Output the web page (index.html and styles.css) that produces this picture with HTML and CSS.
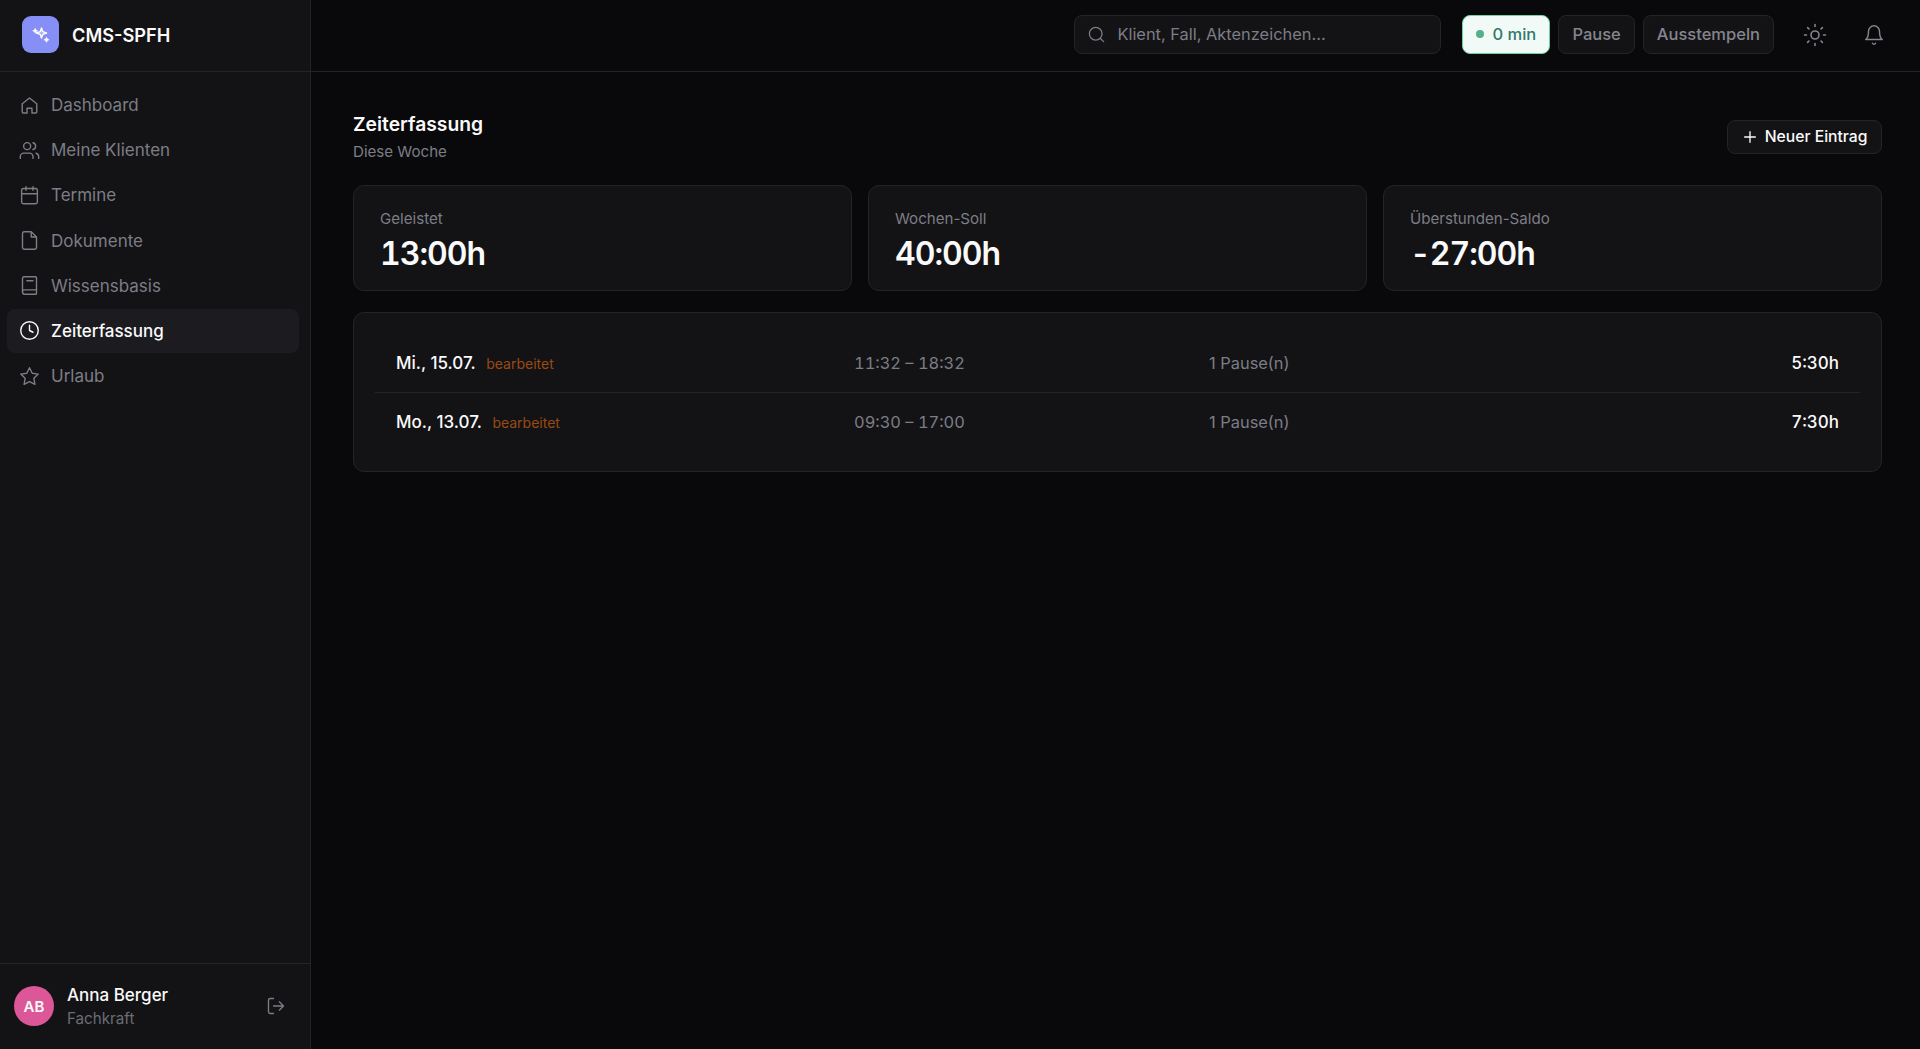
FILE: index.html
```html
<!DOCTYPE html>
<html lang="de">
<head>
<meta charset="utf-8">
<title>Zeiterfassung – CMS-SPFH</title>
<link rel="stylesheet" href="styles.css">
</head>
<body>
<div class="app">
    <aside class="sidebar">
        <div class="brand">
            <span class="logo">
                <svg viewBox="0 0 18 18" width="18" height="18"><path class="star" d="M9.5 2l1.3 3.7 3.7 1.3-3.7 1.3-1.3 3.7-1.3-3.7L4.5 7l3.7-1.3z"/><path d="M3.2 2l.9 1.9 1.9.9-1.9.9-.9 1.9-.9-1.9-1.9-.9 1.9-.9z"/><path d="M14.5 11l1 1.8 1.8 1-1.8 1-1 1.8-1-1.8-1.8-1 1.8-1z"/></svg>
            </span>
            <span class="brand_name">CMS-SPFH</span>
        </div>
        <nav class="nav">
            <a class="nav_item"><svg class="icon" viewBox="0 0 24 24"><path d="M3.7 10L12 3.5l8.3 6.5v9.3a1.2 1.2 0 0 1-1.2 1.2h-4.3v-5.3H9.2v5.3H4.9a1.2 1.2 0 0 1-1.2-1.2z"/></svg>Dashboard</a>
            <a class="nav_item"><svg class="icon" viewBox="0 0 24 24"><path d="M16 21v-2a4 4 0 0 0-4-4H5.5a4 4 0 0 0-4 4v2M22.5 21v-2a4 4 0 0 0-3-3.87M16 3.13a4 4 0 0 1 0 7.75"/><circle cx="9.3" cy="7" r="4"/></svg>Meine Klienten</a>
            <a class="nav_item"><svg class="icon" viewBox="0 0 24 24"><rect x="3" y="4" width="18" height="17.5" rx="2"/><path d="M16 2v4M8 2v4M3 10h18"/></svg>Termine</a>
            <a class="nav_item"><svg class="icon" viewBox="0 0 24 24"><path d="M14 2H6a2 2 0 0 0-2 2v16a2 2 0 0 0 2 2h12a2 2 0 0 0 2-2V8zM14 2v6h6"/></svg>Dokumente</a>
            <a class="nav_item"><svg class="icon" viewBox="0 0 24 24"><path d="M4 19.5V4a2 2 0 0 1 2-2h13a1 1 0 0 1 1 1v18a1 1 0 0 1-1 1H6.5a2.5 2.5 0 0 1 0-5H20M9 6.5h7"/></svg>Wissensbasis</a>
            <a class="nav_item active"><svg class="icon" viewBox="0 0 24 24"><circle cx="12" cy="12" r="10"/><path d="M12 6v6l4 2"/></svg>Zeiterfassung</a>
            <a class="nav_item"><svg class="icon" viewBox="0 0 24 24"><path d="M12 2l3.09 6.26L22 9.27l-5 4.87 1.18 6.88L12 17.77l-6.18 3.25L7 14.14 2 9.27l6.91-1.01z"/></svg>Urlaub</a>
        </nav>
        <div class="user">
            <span class="avatar">AB</span>
            <div class="user_text">
                <div class="user_name">Anna Berger</div>
                <div class="user_role">Fachkraft</div>
            </div>
            <svg class="icon logout" viewBox="0 0 24 24"><path d="M9 21H5a2 2 0 0 1-2-2V5a2 2 0 0 1 2-2h4M16 17l5-5-5-5M21 12H9"/></svg>
        </div>
    </aside>
    <div class="content">
        <header class="topbar">
            <div class="search">
                <svg class="icon" viewBox="0 0 24 24"><circle cx="11" cy="11" r="8"/><path d="M21 21l-4.35-4.35"/></svg>
                <span>Klient, Fall, Aktenzeichen...</span>
            </div>
            <div class="clock">
                <span class="timer"><i class="dot"></i>0 min</span>
                <button class="btn">Pause</button>
                <button class="btn">Ausstempeln</button>
            </div>
            <svg class="icon sun" viewBox="0 0 24 24"><circle cx="12" cy="12" r="4"/><path d="M12 1.5v2M12 20.5v2M4.6 4.6L6 6M18 18l1.4 1.4M1.5 12h2M20.5 12h2M6 18l-1.4 1.4M19.4 4.6L18 6"/></svg>
            <svg class="icon bell" viewBox="0 0 24 24"><path d="M6 8a6 6 0 0 1 12 0c0 7 3 9 3 9H3s3-2 3-9M10.3 21a1.94 1.94 0 0 0 3.4 0"/></svg>
        </header>
        <main class="main">
            <div class="page_head">
                <div>
                    <h1>Zeiterfassung</h1>
                    <p class="sub">Diese Woche</p>
                </div>
                <button class="btn_new"><svg class="icon" viewBox="0 0 24 24"><path d="M12 4v16M4 12h16"/></svg>Neuer Eintrag</button>
            </div>
            <div class="stats">
                <div class="card stat"><div class="label">Geleistet</div><div class="value">13:00h</div></div>
                <div class="card stat"><div class="label">Wochen-Soll</div><div class="value">40:00h</div></div>
                <div class="card stat"><div class="label">Überstunden-Saldo</div><div class="value">-27:00h</div></div>
            </div>
            <div class="card list">
                <div class="row">
                    <div class="date">Mi., 15.07.<span class="edited">bearbeitet</span></div>
                    <div class="time">11:32 – 18:32</div>
                    <div class="pause">1 Pause(n)</div>
                    <div class="total">5:30h</div>
                </div>
                <div class="row">
                    <div class="date">Mo., 13.07.<span class="edited">bearbeitet</span></div>
                    <div class="time">09:30 – 17:00</div>
                    <div class="pause">1 Pause(n)</div>
                    <div class="total">7:30h</div>
                </div>
            </div>
        </main>
    </div>
</div>
</body>
</html>
```
FILE: styles.css
```css
html,body{
    height: 100%;
    margin: 0;
}
body{
    background: #09090b;
    color: #fafafa;
    font-family: Inter, "Liberation Sans", sans-serif;
    font-size: 17px;
}
*{
    box-sizing: border-box;
}
button{
    font-family: inherit;
    font-size: inherit;
}
.app{
    display: flex;
    height: 100%;
}
.icon{
    width: 21px;
    height: 21px;
    flex: none;
    fill: none;
    stroke: currentColor;
    stroke-width: 1.6;
    stroke-linecap: round;
    stroke-linejoin: round;
}

/* sidebar */
.sidebar{
    display: flex;
    flex-direction: column;
    flex: none;
    width: 311px;
    background: #131316;
    border-right: 1px solid #242427;
}
.brand{
    display: flex;
    align-items: center;
    gap: 13px;
    height: 72px;
    padding: 0 22px 2px;
    border-bottom: 1px solid #242427;
}
.logo{
    display: flex;
    align-items: center;
    justify-content: center;
    width: 37px;
    height: 37px;
    border-radius: 9px;
    background: #858ff5;
}
.logo svg{
    fill: #fff;
    stroke: #fff;
    stroke-width: .3;
}
.logo .star{
    fill: #a4abf8;
    stroke-width: 1.4;
    stroke-linejoin: round;
}
.brand_name{
    font-size: 18.2px;
    font-weight: 600;
}
.nav{
    display: flex;
    flex-direction: column;
    flex: 1;
    gap: 1.2px;
    padding: 11px 11px 0 6.5px;
}
.nav_item{
    display: flex;
    align-items: center;
    gap: 11px;
    height: 44px;
    padding-left: 12.5px;
    border-radius: 8px;
    color: #7d7d85;
}
.nav_item.active{
    background: #1b1b20;
    color: #fafafa;
    font-weight: 500;
}
.user{
    display: flex;
    align-items: center;
    height: 86px;
    padding: 0 24px 1px 14px;
    border-top: 1px solid #242427;
}
.avatar{
    display: flex;
    align-items: center;
    justify-content: center;
    width: 40px;
    height: 40px;
    margin-right: 13px;
    border-radius: 50%;
    background: #db5798;
    font-size: 15px;
    font-weight: 600;
}
.user_text{
    flex: 1;
    padding-top: 3px;
}
.user_name{
    font-weight: 500;
    line-height: 23px;
}
.user_role{
    color: #6c6c74;
    font-size: 15.2px;
    line-height: 24px;
}
.logout{
    width: 20px;
    height: 20px;
    color: #7d7d85;
}

/* top bar */
.content{
    flex: 1;
    min-width: 0;
}
.topbar{
    display: flex;
    align-items: center;
    justify-content: flex-end;
    height: 72px;
    padding: 0 35.5px 2px 0;
    border-bottom: 1px solid #242427;
    color: #85858d;
}
.search{
    display: flex;
    align-items: center;
    gap: 11px;
    width: 367px;
    height: 39px;
    margin-right: 21px;
    padding: 0 0 1px 12px;
    border: 1px solid #242427;
    border-radius: 8px;
    background: #131316;
    color: #7d7d85;
    font-size: 16.4px;
}
.search .icon{
    width: 19px;
    height: 19px;
}
.clock{
    display: flex;
    gap: 8px;
    margin-right: 28.5px;
}
.timer, .btn{
    display: flex;
    align-items: center;
    height: 39px;
    padding: 0 13px 1px;
    border: 1px solid #242427;
    border-radius: 8px;
    background: #131316;
    color: #85858d;
    font-size: 16.5px;
    font-weight: 500;
}
.timer{
    gap: 8px;
    width: 88px;
    border-color: #6ed2a3;
    background: #f1faf7;
    color: #33786a;
}
.dot{
    width: 8px;
    height: 8px;
    border-radius: 50%;
    background: #52b08a;
}
.sun{
    width: 24px;
    height: 24px;
    margin-right: 36px;
}
.bell{
    width: 22px;
    height: 22px;
}

/* page */
.main{
    display: flex;
    flex-direction: column;
    gap: 21px;
    padding: 38px 38px 0 42px;
}
.page_head{
    display: flex;
    align-items: center;
    justify-content: space-between;
    height: 53px;
    margin-bottom: 1px;
}
h1{
    margin: 0;
    font-size: 19.3px;
    font-weight: 600;
    line-height: 30px;
}
.sub{
    margin: 0;
    color: #7d7d85;
    font-size: 15.1px;
    line-height: 26px;
}
.btn_new{
    display: flex;
    align-items: center;
    gap: 7px;
    height: 34px;
    padding: 0 13.5px;
    border: 1px solid #242427;
    border-radius: 8px;
    background: #131316;
    color: #fafafa;
    font-size: 15.7px;
    font-weight: 500;
}
.btn_new .icon{
    width: 16px;
    height: 16px;
    stroke-width: 2;
}
.card{
    border: 1px solid #242427;
    border-radius: 11px;
    background: #131316;
}
.stats{
    display: grid;
    grid-template-columns: repeat(3, 1fr);
    gap: 16px;
}
.stat{
    height: 106px;
    padding: 22px 26px;
}
.label{
    color: #7d7d85;
    font-size: 15.1px;
    line-height: 22px;
}
.value{
    font-size: 32px;
    font-weight: 600;
    line-height: 47px;
    letter-spacing: -0.03em;
    font-variant-numeric: tabular-nums;
}
.list{
    padding: 21px;
}
.row{
    display: grid;
    grid-template-columns: 458px 355px 1fr auto;
    align-items: center;
    height: 58px;
    padding: 0 21px;
}
.row + .row{
    border-top: 1px solid #242427;
}
.date, .total{
    font-weight: 500;
}
.edited{
    margin-left: 10.5px;
    color: #9a4a12;
    font-size: 14px;
    font-weight: 400;
}
.time, .pause{
    color: #7d7d85;
    font-size: 16.4px;
}
.time, .total{
    font-variant-numeric: tabular-nums;
}
```
